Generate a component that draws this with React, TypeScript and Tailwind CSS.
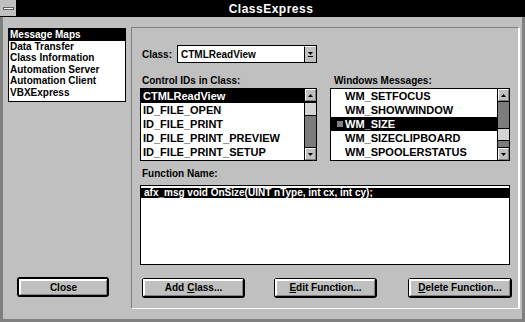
import type { ReactNode } from 'react'

const leftItems = [
  'Message Maps',
  'Data Transfer',
  'Class Information',
  'Automation Server',
  'Automation Client',
  'VBXExpress',
]

const controlIds = [
  'CTMLReadView',
  'ID_FILE_OPEN',
  'ID_FILE_PRINT',
  'ID_FILE_PRINT_PREVIEW',
  'ID_FILE_PRINT_SETUP',
]

const messages = [
  'WM_SETFOCUS',
  'WM_SHOWWINDOW',
  'WM_SIZE',
  'WM_SIZECLIPBOARD',
  'WM_SPOOLERSTATUS',
]

function Arrow({ down }: { down?: boolean }) {
  return (
    <svg width="5" height="3" viewBox="0 0 5 3">
      <path d={down ? 'M0 0h5L2.5 3z' : 'M0 3h5L2.5 0z'} fill="#000" />
    </svg>
  )
}

function ArrowBox({ down }: { down?: boolean }) {
  return (
    <div className="h-[12px] bg-[#c0c0c0] border-t border-l border-t-white border-l-white border-b border-r border-b-[#808080] border-r-[#808080] flex items-center justify-center">
      <Arrow down={down} />
    </div>
  )
}

// thumbTop / thumbHeight in px inside the track
function ScrollBar({ thumbTop, thumbHeight }: { thumbTop: number; thumbHeight: number }) {
  return (
    <div className="w-[12px] border-l border-black flex flex-col">
      <ArrowBox />
      <div className="flex-1 bg-[#7c7c7c] border-y border-black flex flex-col">
        <div style={{ height: thumbTop }} />
        <div
          className="bg-[#d4d4d4] border-y border-black"
          style={{ height: thumbHeight }}
        />
      </div>
      <ArrowBox down />
    </div>
  )
}

function Button({ children, w, isDefault }: { children: ReactNode; w: string; isDefault?: boolean }) {
  return (
    <div
      className={`${w} h-[20px] rounded-[3px] bg-[#c0c0c0] ${
        isDefault ? 'border-2 border-black' : 'border border-black border-b-2 border-r-2'
      }`}
    >
      <div className="h-full border-t-2 border-l-2 border-t-white border-l-white border-b border-r border-b-[#808080] border-r-[#808080] flex items-center justify-center text-[10px] font-bold leading-none">
        {children}
      </div>
    </div>
  )
}

export default function App() {
  return (
    <div className="w-[525px] h-[322px] bg-[#c0c0c0] flex flex-col overflow-hidden text-black font-['Liberation_Sans',Arial,sans-serif]">
      {/* Title bar */}
      <div className="h-[17px] bg-black flex shrink-0">
        <div className="w-[17px] h-[17px] bg-[#c0c0c0] border-r border-b border-black flex items-center justify-center">
          <div className="w-[11px] h-[3px] bg-white border border-[#606060]" />
        </div>
        <div className="flex-1 flex items-center justify-center text-white text-[12px] font-bold tracking-[0.5px]">
          ClassExpress
        </div>
      </div>

      <div className="flex flex-1 border-l-[3px] border-r-[3px] border-b-[3px] border-[#808080]">
        {/* Left column */}
        <div className="w-[128px] flex flex-col">
          <div className="ml-[5px] mt-[11px] w-[118px] h-[74px] bg-white border border-black flex flex-col text-[10px] font-bold">
            {leftItems.map((item, i) => (
              <div
                key={item}
                className={`h-[11.5px] leading-[11.5px] px-[1px] ${i === 0 ? 'bg-black text-white' : ''}`}
              >
                {item}
              </div>
            ))}
          </div>
          <div className="mt-auto mb-[22px] ml-[14px]">
            <Button w="w-[92px]" isDefault>
              Close
            </Button>
          </div>
        </div>

        {/* Right panel */}
        <div className="w-[389px] mt-[10px] mb-[10px] border-t border-l border-[#808080] border-r-2 border-b border-r-white border-b-white flex flex-col pl-[8px]">
          <div className="mt-[17px] flex items-center h-[18px]">
            <div className="w-[37px] pl-[2px] text-[10px] font-bold">Class:</div>
            <div className="w-[140px] h-[18px] flex border border-black bg-white">
              <div className="flex-1 flex items-center pl-[3px] text-[10px] font-bold">CTMLReadView</div>
              <div className="w-[12px] border-l border-black bg-[#c0c0c0] flex flex-col items-center justify-center gap-[1px] border-t border-t-white">
                <Arrow down />
                <div className="w-[5px] h-[1px] bg-black" />
              </div>
            </div>
          </div>

          <div className="mt-[12px] flex h-[12px] leading-[12px] text-[10px] font-bold">
            <div className="w-[190px] pl-[2px]">Control IDs in Class:</div>
            <div className="pl-[4px]">Windows Messages:</div>
          </div>

          <div className="mt-[1px] flex gap-[13px] h-[73px]">
            <div className="w-[177px] h-full bg-white border border-black flex">
              <div className="flex-1 flex flex-col text-[11px] font-bold">
                {controlIds.map((id, i) => (
                  <div
                    key={id}
                    className={`h-[14px] leading-[14px] pl-[2px] whitespace-nowrap overflow-hidden ${
                      i === 0 ? 'bg-black text-white' : ''
                    }`}
                  >
                    {id}
                  </div>
                ))}
              </div>
              <ScrollBar thumbTop={0} thumbHeight={14} />
            </div>
            <div className="w-[180px] h-full bg-white border border-black flex">
              <div className="flex-1 flex flex-col text-[11px] font-bold">
                {messages.map((m, i) => (
                  <div
                    key={m}
                    className={`h-[14px] flex items-center whitespace-nowrap overflow-hidden ${
                      i === 2 ? 'bg-black text-white' : ''
                    }`}
                  >
                    <div className="w-[14px] flex justify-end pr-[2px]">
                      {i === 2 && <div className="w-[6px] h-[6px] bg-[#808080]" />}
                    </div>
                    {m}
                  </div>
                ))}
              </div>
              <ScrollBar thumbTop={26} thumbHeight={13} />
            </div>
          </div>

          <div className="mt-[7px] h-[12px] leading-[12px] pl-[2px] text-[10px] font-bold">Function Name:</div>

          <div className="mt-[5px] w-[370px] h-[80px] bg-white border border-black pt-[2px]">
            <div className="h-[10px] leading-[10px] bg-black text-white text-[10px] font-bold pl-[3px] whitespace-nowrap">
              afx_msg void OnSize(UINT nType, int cx, int cy);
            </div>
          </div>

          <div className="mt-[13px] flex ml-[2px]">
            <Button w="w-[103px]">
              Add <span className="underline ml-[3px]">C</span>lass...
            </Button>
            <div className="ml-[29px]">
              <Button w="w-[103px]">
                <span className="underline">E</span>dit Function...
              </Button>
            </div>
            <div className="ml-[31px]">
              <Button w="w-[104px]">
                <span className="underline">D</span>elete Function...
              </Button>
            </div>
          </div>
        </div>
      </div>
    </div>
  )
}
